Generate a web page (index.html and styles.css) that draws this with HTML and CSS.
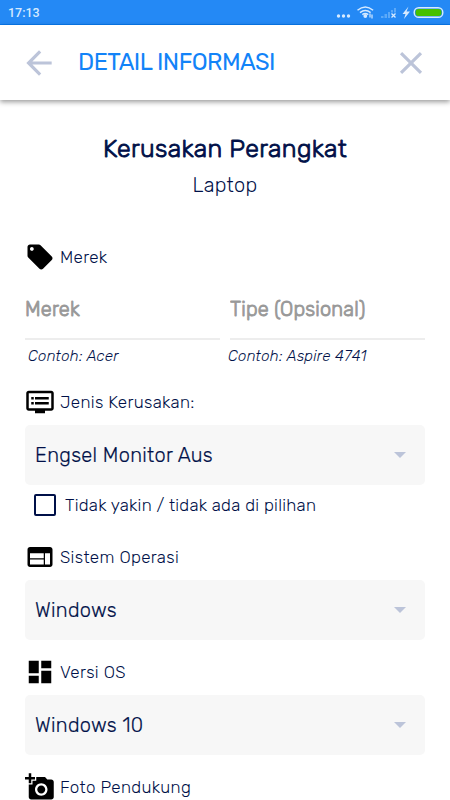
FILE: index.html
```html
<!DOCTYPE html>
<html lang="id">
<head>
    <meta charset="UTF-8">
    <meta name="viewport" content="width=device-width, initial-scale=1.0">
    <title>Detail Informasi</title>
    <link rel="stylesheet" href="styles.css">
</head>
<body>
    <div class="status-bar">
        <span class="time">17:13</span>
        <svg class="status-icons" width="110" height="24" viewBox="0 0 110 24">
            <g fill="#d6eaff">
                <circle cx="3.500" cy="16" r="1.700"/>
                <circle cx="8.500" cy="16" r="1.700"/>
                <circle cx="13.500" cy="16" r="1.700"/>
                <path d="M73.500 6.500l-6 7.500h3l-1.500 5 6-7.500h-3.500z"/>
                <circle cx="30.300" cy="16" r="1.900"/>
            </g>
            <g fill="none" stroke="#d6eaff" stroke-width="1.500">
                <path d="M22.500 10.300q7.800-6.600 15.600 0M25 12.600q5.300-4.200 10.600 0M27.300 14.700q3-2.200 6 0"/>
                <path d="M35 13.500v4M37 14.500v4" stroke-width="1.200"/>
                <path d="M56.500 13.500l4 4M60.500 13.500l-4 4" stroke-width="1.300"/>
                <rect x="79.200" y="7.700" width="28.600" height="9.600" rx="4.600" stroke-width="1.400"/>
            </g>
            <path fill="#5ba9f9" d="M46 18v-2h2.500v2zM49.500 18v-4H52v4zM53 18v-6h2v6zM56 12.500v-2.500h2v2.500zM59 12.500V8h2v4.500z"/>
            <rect x="80.500" y="9" width="26" height="7" rx="3.300" fill="#46c000"/>
        </svg>
    </div>

    <header class="header">
        <svg class="nav-icon" viewBox="0 0 24 24"><path d="M20 11H7.830l5.590-5.590L12 4l-8 8 8 8 1.410-1.410L7.830 13H20v-2z"/></svg>
        <h1>DETAIL INFORMASI</h1>
        <svg class="nav-icon" viewBox="0 0 24 24"><path d="M19 6.410L17.590 5 12 10.590 6.410 5 5 6.410 10.590 12 5 17.590 6.410 19 12 13.410 17.590 19 19 17.590 13.410 12z"/></svg>
    </header>

    <main class="content">
        <h2>Kerusakan Perangkat</h2>
        <p class="device">Laptop</p>

        <div class="label label-brand">
            <svg viewBox="0 0 24 24"><path d="M21.410 11.580l-9-9C12.050 2.220 11.550 2 11 2H4c-1.100 0-2 .9-2 2v7c0 .55.22 1.050.59 1.420l9 9c.36.36.86.58 1.410.58s1.050-.22 1.410-.59l7-7c.37-.36.59-.86.59-1.410s-.23-1.060-.59-1.420zM5.500 7C4.670 7 4 6.330 4 5.500S4.670 4 5.500 4 7 4.670 7 5.500 6.330 7 5.500 7z"/></svg>
            <span>Merek</span>
        </div>
        <div class="fields">
            <div class="field">
                <input type="text" placeholder="Merek">
                <p class="hint">Contoh: Acer</p>
            </div>
            <div class="field">
                <input type="text" placeholder="Tipe (Opsional)">
                <p class="hint hint-type">Contoh: Aspire 4741</p>
            </div>
        </div>

        <div class="label label-damage">
            <svg viewBox="0 0 24 24"><path d="M21 3H3c-1.100 0-2 .9-2 2v12c0 1.100.9 2 2 2h5v2h8v-2h5c1.100 0 1.990-.9 1.990-2L23 5c0-1.100-.9-2-2-2zm0 14H3V5h18v12zm-2-9H8v2h11V8zm0 4H8v2h11v-2zM7 8H5v2h2V8zm0 4H5v2h2v-2z"/></svg>
            <span>Jenis Kerusakan:</span>
        </div>
        <div class="select">
            <span>Engsel Monitor Aus</span>
            <i class="caret"></i>
        </div>
        <label class="check">
            <input type="checkbox">
            <span>Tidak yakin / tidak ada di pilihan</span>
        </label>

        <div class="label label-system">
            <svg viewBox="0 0 24 24"><path d="M20 4H4c-1.100 0-1.990.9-1.990 2L2 18c0 1.100.9 2 2 2h16c1.100 0 2-.9 2-2V6c0-1.100-.9-2-2-2zm-5 14H4v-4h11v4zm0-5H4V9h11v4zm5 5h-4V9h4v9z"/></svg>
            <span>Sistem Operasi</span>
        </div>
        <div class="select">
            <span>Windows</span>
            <i class="caret"></i>
        </div>

        <div class="label label-version">
            <svg viewBox="0 0 24 24"><path d="M3 13h8V3H3v10zm0 8h8v-6H3v6zm10 0h8V11h-8v10zm0-18v6h8V3h-8z"/></svg>
            <span>Versi OS</span>
        </div>
        <div class="select">
            <span>Windows 10</span>
            <i class="caret"></i>
        </div>

        <div class="label label-photo">
            <svg viewBox="0 0 24 24"><path d="M3 4V1h2v3h3v2H5v3H3V6H0V4h3zm3 6V7h3V4h7l1.830 2H21c1.100 0 2 .9 2 2v12c0 1.100-.9 2-2 2H5c-1.100 0-2-.9-2-2V10h3zm7 9c2.760 0 5-2.240 5-5s-2.240-5-5-5-5 2.240-5 5 2.240 5 5 5zm-3.200-5c0 1.770 1.430 3.200 3.200 3.200s3.200-1.430 3.200-3.200-1.430-3.200-3.200-3.200-3.200 1.430-3.200 3.200z"/></svg>
            <span>Foto Pendukung</span>
        </div>
    </main>
</body>
</html>
```
FILE: styles.css
```css
* {
    box-sizing: border-box;
}

body {
    font-family: Rubik, Roboto, sans-serif;
    font-weight: 300;
    background-color: #fff;
    color: #001048;
    margin: 0;
    height: 800px;
    overflow: hidden;
}

h1, h2, p {
    margin: 0;
    white-space: nowrap;
}

.status-bar {
    display: flex;
    justify-content: space-between;
    height: 25px;
    padding: 0 5px 0 8px;
    background-color: #2489f5;
    border-bottom: 1px solid #0878ee;
}

.time {
    color: #d6eaff;
    font-family: Roboto, sans-serif;
    font-size: 12.5px;
    font-weight: 500;
    line-height: 26px;
}

.status-icons {
    display: block;
}

.header {
    display: flex;
    align-items: center;
    height: 75px;
    padding: 0 20px;
    background-color: #fff;
    box-shadow: 0 2px 5px rgba(0, 0, 0, 0.4);
}

.header h1 {
    flex: 1;
    margin: -1px 0 0 20px;
    color: #1283f8;
    font-size: 23.5px;
    font-weight: 400;
    line-height: 30px;
    letter-spacing: -0.55px;
}

.nav-icon {
    width: 38px;
    height: 38px;
    fill: #bcc4d9;
}

.content {
    padding: 32px 25px 0;
}

h2 {
    font-size: 25px;
    font-weight: 300;
    line-height: 34px;
    text-align: center;
    letter-spacing: 0.35px;
    -webkit-text-stroke: 0.9px #001048;
}

.device {
    font-size: 20px;
    line-height: 26px;
    margin-top: 6px;
    text-align: center;
    letter-spacing: 0.3px;
}

.label {
    display: flex;
    align-items: center;
    height: 30px;
    gap: 5px;
    font-size: 17px;
    letter-spacing: 0.32px;
    white-space: nowrap;
}

.label span {
    padding-bottom: 1px;
}

.label svg {
    width: 30px;
    height: 30px;
    fill: #000;
}

.label-brand {
    margin-top: 44px;
}

.label-damage {
    margin-top: 20px;
}

.label-system {
    margin-top: 22px;
}

.label-version,
.label-photo {
    margin-top: 17px;
}

.fields {
    display: grid;
    grid-template-columns: 195px 195px;
    gap: 10px;
    margin-top: 8px;
}

.field input {
    display: block;
    width: 100%;
    height: 60px;
    padding: 0;
    border: none;
    border-bottom: 2px solid #ededed;
    outline: none;
    background: none;
    font-family: inherit;
    font-size: 20px;
    font-weight: 300;
    letter-spacing: 0.18px;
}

.field input::placeholder {
    color: #999;
    -webkit-text-stroke: 0.9px #999;
}

.hint {
    height: 27px;
    padding: 4px 0 0 3px;
    font-size: 15px;
    font-style: italic;
    line-height: 24px;
    letter-spacing: 0.27px;
}

.hint-type {
    margin-left: -5px;
}

.select {
    display: flex;
    align-items: center;
    justify-content: space-between;
    height: 60px;
    margin-top: 8px;
    padding: 0 19px 0 10px;
    border-radius: 5px;
    background-color: #f7f7f7;
    font-size: 20px;
    letter-spacing: 0.3px;
}

.select span {
    padding-bottom: 1px;
    -webkit-text-stroke: 0.2px #001048;
}

.caret {
    border-left: 6px solid transparent;
    border-right: 6px solid transparent;
    border-top: 6px solid #bcc4d9;
}

.check {
    display: flex;
    align-items: center;
    height: 30px;
    margin-top: 5px;
    padding-left: 9px;
    gap: 9px;
    font-size: 17px;
    letter-spacing: 0.25px;
    white-space: nowrap;
}

.check input {
    appearance: none;
    width: 22px;
    height: 22px;
    margin: 0;
    border: 2px solid #001048;
    border-radius: 2px;
}
```
